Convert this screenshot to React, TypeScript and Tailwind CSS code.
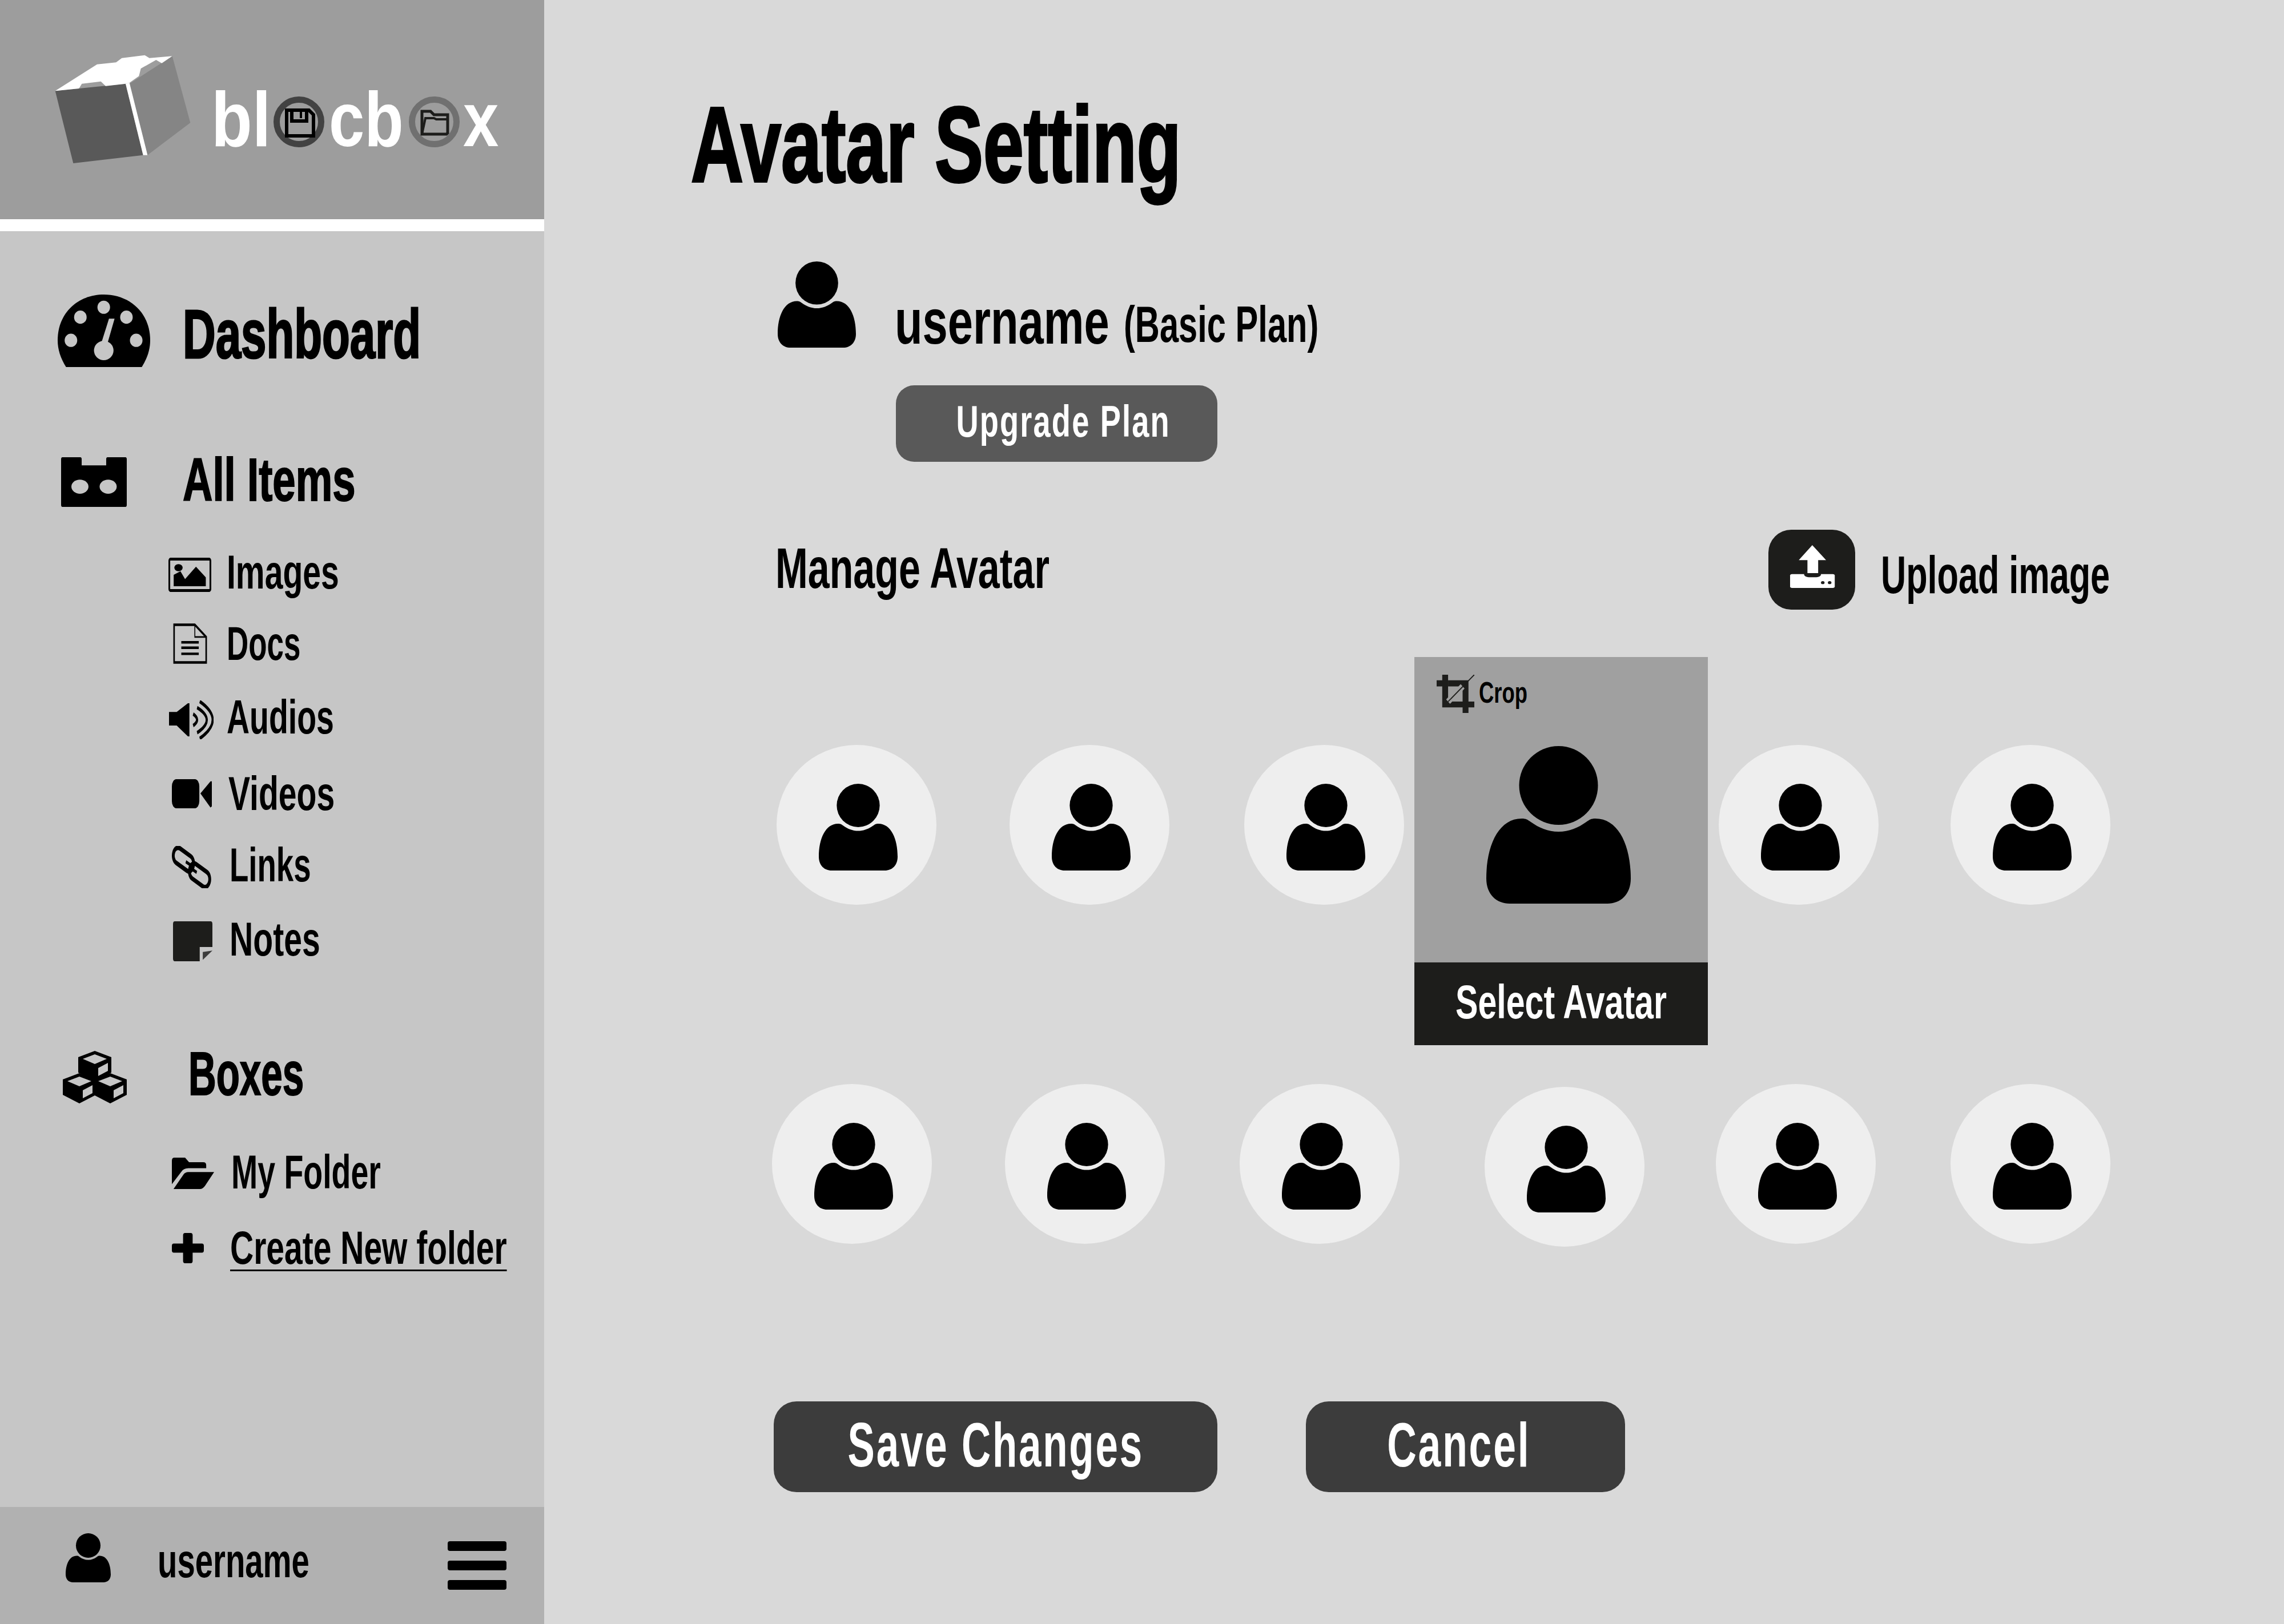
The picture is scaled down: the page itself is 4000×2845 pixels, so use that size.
import React from "react";

const label = "block whitespace-nowrap font-bold leading-none origin-left";
const centered = "block whitespace-nowrap font-bold leading-none origin-center tracking-[0.04em] text-white";

const PersonIcon = ({ className }: { className: string }) => (
  <svg viewBox="0 0 253 276" preserveAspectRatio="none" className={"shrink-0 " + className}>
    <ellipse cx="126.5" cy="69" rx="69" ry="69" fill="#000" />
    <path
      d="M62 127C70 127 72 129 78 133C92 143 108 150 126.5 150C145 150 161 143 175 133C181 129 183 127 191 127C232 127 253 175 253 232C253 260 235 276 212 276L41 276C18 276 0 260 0 232C0 175 21 127 62 127Z"
      fill="#000"
    />
  </svg>
);

const AvatarCircle = ({ className }: { className: string }) => (
  <div className={"flex size-[280px] shrink-0 items-center justify-center rounded-full bg-[#eeeeee] pl-[6px] pt-[7px] " + className}>
    <PersonIcon className="h-[152px] w-[138px]" />
  </div>
);

const CubeLogo = () => (
  <svg viewBox="0 0 900 720" className="h-[240px] w-[300px] shrink-0">
    <polygon points="50,238 145,618 512,575 420,200" fill="#595959" />
    <polygon points="440,200 535,575 760,405 665,55" fill="#858585" />
    <polygon
      points="50,238 270,98 370,88 400,65 520,50 545,65 665,55 610,92 580,75 500,120 490,160 440,195 420,200 315,212 290,188 190,200 175,225"
      fill="#fff"
    />
    <polygon points="420,200 440,195 535,575 512,575" fill="#fff" />
  </svg>
);

const FloppyRing = () => (
  <svg viewBox="0 0 89 89" className="size-[89px] shrink-0">
    <circle cx="44.5" cy="44.5" r="39" fill="none" stroke="#424242" strokeWidth="11" />
    <path d="M23 24H62L70 32V69H23Z" fill="none" stroke="#000" strokeWidth="6" />
    <path d="M32 24V43H58V24" fill="none" stroke="#000" strokeWidth="6" />
    <rect x="46" y="26" width="4" height="12" fill="#000" />
  </svg>
);

const FolderRing = () => (
  <svg viewBox="0 0 89 89" className="size-[89px] shrink-0">
    <circle cx="44.5" cy="44.5" r="39" fill="none" stroke="#707070" strokeWidth="11" />
    <path d="M23 66V26H38L44 32H68V64L66 66Z" fill="none" stroke="#1d1d1b" strokeWidth="5" />
    <path d="M23 66L29 38H44L48 40H68" fill="none" stroke="#1d1d1b" strokeWidth="4" />
  </svg>
);

const GaugeIcon = () => (
  <svg viewBox="0 0 265 285" preserveAspectRatio="none" className="h-[127px] w-[162px] shrink-0">
    <path d="M24 285C8 250 0 215 0 180C0 70 60 0 132 0C205 0 265 70 265 180C265 215 257 250 241 285Z" fill="#000" />
    <ellipse cx="132" cy="50" rx="18" ry="26" fill="#c6c6c6" />
    <ellipse cx="65" cy="89" rx="18" ry="26" fill="#c6c6c6" />
    <ellipse cx="197" cy="89" rx="18" ry="26" fill="#c6c6c6" />
    <ellipse cx="38" cy="180" rx="18" ry="26" fill="#c6c6c6" />
    <ellipse cx="225" cy="180" rx="18" ry="26" fill="#c6c6c6" />
    <ellipse cx="132" cy="220" rx="28" ry="38" fill="#c6c6c6" />
    <polygon points="147,95 163,95 142,195 124,195" fill="#c6c6c6" />
  </svg>
);

const AllItemsIcon = () => (
  <svg viewBox="0 0 300 140" preserveAspectRatio="none" className="h-[87px] w-[115px] shrink-0">
    <path d="M6 0H88Q94 0 94 6V23H206V6Q206 0 212 0H294Q300 0 300 6V134Q300 140 294 140H6Q0 140 0 134V6Q0 0 6 0Z" fill="#000" />
    <ellipse cx="86" cy="83" rx="39" ry="20" fill="#c6c6c6" />
    <ellipse cx="215" cy="83" rx="39" ry="20" fill="#c6c6c6" />
  </svg>
);

const ImagesIcon = () => (
  <svg viewBox="0 0 196 96" preserveAspectRatio="none" className="h-[60px] w-[75px] shrink-0">
    <rect x="4" y="4" width="188" height="88" rx="5" fill="none" stroke="#000" strokeWidth="8" />
    <ellipse cx="46" cy="28" rx="19" ry="10" fill="#000" />
    <polygon points="24,80 24,48 55,38 76,60 126,25 171,55 171,80" fill="#000" />
  </svg>
);

const DocsIcon = () => (
  <svg viewBox="0 0 157 113" preserveAspectRatio="none" className="h-[71px] w-[60px] shrink-0">
    <path d="M5 4H100L152 38V109H5Z" fill="none" stroke="#000" strokeWidth="7" />
    <path d="M100 4V38H152" fill="none" stroke="#000" strokeWidth="4" />
    <path d="M38 53H118M38 68H118M38 85H118" fill="none" stroke="#000" strokeWidth="7" />
  </svg>
);

const AudioIcon = () => (
  <svg viewBox="0 0 203 108" preserveAspectRatio="none" className="h-[68px] w-[78px] shrink-0">
    <polygon points="0,32 35,32 86,8 93,8 93,100 86,100 35,70 0,70" fill="#000" />
    <path d="M110 38Q146 54 110 70" fill="none" stroke="#000" strokeWidth="10" />
    <path d="M128 20Q216 54 128 90" fill="none" stroke="#000" strokeWidth="10" />
    <path d="M140 3Q258 54 140 106" fill="none" stroke="#000" strokeWidth="10" />
  </svg>
);

const VideoIcon = () => (
  <svg viewBox="0 0 182 82" preserveAspectRatio="none" className="h-[51px] w-[70px] shrink-0">
    <rect x="0" y="0" width="125" height="82" rx="20" fill="#000" />
    <polygon points="130,40 176,6 182,6 182,76 176,80" fill="#000" />
  </svg>
);

const LinkIcon = () => (
  <svg viewBox="0 0 194 118" preserveAspectRatio="none" className="h-[74px] w-[74px] shrink-0">
    <rect x="12" y="16" width="98" height="44" rx="22" transform="rotate(24 61 38)" fill="none" stroke="#000" strokeWidth="13" />
    <rect x="86" y="60" width="98" height="44" rx="22" transform="rotate(24 135 82)" fill="none" stroke="#000" strokeWidth="13" />
    <path d="M72 44L100 56M94 62L122 74" fill="none" stroke="#000" strokeWidth="9" />
  </svg>
);

const NotesIcon = () => (
  <svg viewBox="0 0 180 112" preserveAspectRatio="none" className="h-[70px] w-[69px] shrink-0">
    <path d="M8 0H172Q180 0 180 8V72H122V112H8Q0 112 0 104V8Q0 0 8 0Z" fill="#1d1d1b" />
    <polygon points="136,108 136,86 180,82" fill="#3d3d3d" />
  </svg>
);

const Cube = ({ x, y }: { x: number; y: number }) => (
  <g transform={`translate(${x} ${y})`}>
    <polygon points="29,0 58,11 58,38 29,53 0,38 0,11" fill="#000" />
    <polygon points="29,6 50,14 29,23 8,14" fill="#c6c6c6" />
    <polygon points="35,30 52,21 52,35 35,44" fill="#c6c6c6" />
  </g>
);

const BoxesIcon = () => (
  <svg viewBox="0 0 112 92" className="h-[92px] w-[112px] shrink-0">
    <Cube x={27} y={0} />
    <Cube x={0} y={39} />
    <Cube x={54} y={39} />
  </svg>
);

const FolderIcon = () => (
  <svg viewBox="0 0 128 83" preserveAspectRatio="none" className="h-[55px] w-[74px] shrink-0">
    <path d="M0 70V8Q0 0 8 0H40L52 12H95Q104 12 104 20V28H50Q35 28 28 38Z" fill="#000" />
    <path d="M5 83L35 45Q40 38 50 38H128L100 75Q93 83 85 83Z" fill="#000" />
  </svg>
);

const PlusIcon = () => (
  <svg viewBox="0 0 97 80" preserveAspectRatio="none" className="h-[53px] w-[56px] shrink-0">
    <rect x="0" y="28" width="97" height="24" rx="6" fill="#000" />
    <rect x="34" y="0" width="29" height="80" rx="6" fill="#000" />
  </svg>
);

const CropIcon = () => (
  <svg viewBox="0 0 148 138" preserveAspectRatio="none" className="h-[67px] w-[66px] shrink-0">
    <path d="M22 0H45V97H148V118H125V138H102V118H22V42H0V20H22Z" fill="#1d1d1b" />
    <path d="M45 42V20H125V97H102V42Z" fill="#1d1d1b" />
    <path d="M45 97L102 42" stroke="#a0a0a0" strokeWidth="22" />
    <path d="M45 97L148 0" stroke="#1d1d1b" strokeWidth="4" />
  </svg>
);

const UploadIcon = () => (
  <div className="h-[140px] w-[152px] shrink-0 rounded-[40px] bg-[#1d1d1b]">
    <svg viewBox="0 0 340 420" preserveAspectRatio="none" className="h-full w-full">
      <rect x="85" y="233" width="175" height="73" rx="8" fill="#fff" />
      <rect x="140" y="220" width="66" height="30" rx="18" fill="#1d1d1b" />
      <polygon points="172,81 226,160 195,160 195,228 153,228 153,160 119,160" fill="#fff" />
      <ellipse cx="213" cy="278" rx="7" ry="8" fill="#1d1d1b" />
      <ellipse cx="240" cy="278" rx="7" ry="8" fill="#1d1d1b" />
    </svg>
  </div>
);

const Sidebar = () => (
  <aside className="flex h-full w-[953px] shrink-0 flex-col bg-[#c6c6c6]">
    <div className="flex h-[384px] items-start bg-[#9d9d9d]">
      <div className="ml-[80px] mt-[80px]">
        <CubeLogo />
      </div>
      <div className="-ml-[10px] mt-[169px] flex h-[89px] items-center text-white">
        <span className={label + " w-[109px] pb-[8px] text-[135px] scale-x-[0.87]"}>bl</span>
        <FloppyRing />
        <span className={label + " ml-[8px] w-[140px] pb-[8px] text-[135px] scale-x-[0.83]"}>cb</span>
        <FolderRing />
        <span className={label + " ml-[6px] w-[68px] pb-[8px] text-[135px] scale-x-[0.83]"}>x</span>
      </div>
    </div>
    <div className="h-[21px] bg-white" />

    <div className="mt-[110px] flex h-[140px] items-center">
      <div className="mb-[12px] ml-[101px]">
        <GaugeIcon />
      </div>
      <span className={label + " ml-[57px] text-[121px] scale-x-[0.66] [-webkit-text-stroke:3px_#000]"}>Dashboard</span>
    </div>

    <div className="mt-[135px] flex h-[100px] items-center">
      <div className="ml-[107px] mt-[8px]">
        <AllItemsIcon />
      </div>
      <span className={label + " ml-[98px] text-[106px] scale-x-[0.685] [-webkit-text-stroke:2px_#000]"}>All Items</span>
    </div>

    <div className="mt-[62px] flex h-[100px] items-center">
      <div className="ml-[295px] mt-[10px]">
        <ImagesIcon />
      </div>
      <span className={label + " ml-[27px] text-[84px] scale-x-[0.68]"}>Images</span>
    </div>
    <div className="mt-[25px] flex h-[100px] items-center">
      <div className="ml-[303px]">
        <DocsIcon />
      </div>
      <span className={label + " ml-[34px] text-[84px] scale-x-[0.63]"}>Docs</span>
    </div>
    <div className="mt-[29px] flex h-[100px] items-center">
      <div className="ml-[296px] mt-[10px]">
        <AudioIcon />
      </div>
      <span className={label + " ml-[23px] text-[84px] scale-x-[0.66]"}>Audios</span>
    </div>
    <div className="mt-[34px] flex h-[100px] items-center">
      <div className="ml-[301px]">
        <VideoIcon />
      </div>
      <span className={label + " ml-[29px] text-[84px] scale-x-[0.68]"}>Videos</span>
    </div>
    <div className="mt-[25px] flex h-[100px] items-center">
      <div className="ml-[298px] mt-[8px]">
        <LinkIcon />
      </div>
      <span className={label + " ml-[30px] text-[84px] scale-x-[0.65]"}>Links</span>
    </div>
    <div className="mt-[30px] flex h-[100px] items-center">
      <div className="ml-[303px] mt-[8px]">
        <NotesIcon />
      </div>
      <span className={label + " ml-[30px] text-[84px] scale-x-[0.68]"}>Notes</span>
    </div>

    <div className="mt-[136px] flex h-[100px] items-center">
      <div className="ml-[110px] mt-[12px]">
        <BoxesIcon />
      </div>
      <span className={label + " ml-[108px] text-[107px] scale-x-[0.63] [-webkit-text-stroke:2px_#000]"}>Boxes</span>
    </div>
    <div className="mt-[82px] flex h-[80px] items-center">
      <div className="ml-[301px] mt-[4px]">
        <FolderIcon />
      </div>
      <span className={label + " ml-[30px] text-[84px] scale-x-[0.66]"}>My Folder</span>
    </div>
    <div className="mt-[53px] flex h-[80px] items-center">
      <div className="ml-[301px]">
        <PlusIcon />
      </div>
      <span className={label + " ml-[46px] text-[82px] scale-x-[0.695] underline decoration-[3px] underline-offset-[10px]"}>
        Create New folder
      </span>
    </div>

    <div className="mt-auto flex h-[205px] items-center bg-[#b1b1b1]">
      <PersonIcon className="mb-[28px] ml-[115px] h-[86px] w-[79px]" />
      <span className={label + " mb-[18px] ml-[82px] text-[84px] scale-x-[0.67]"}>username</span>
      <div className="ml-auto mr-[66px] flex w-[103px] flex-col gap-[17px]">
        <div className="h-[17px] rounded-[4px] bg-black" />
        <div className="h-[17px] rounded-[4px] bg-black" />
        <div className="h-[17px] rounded-[4px] bg-black" />
      </div>
    </div>
  </aside>
);

const Main = () => (
  <main className="flex h-full flex-1 flex-col bg-[#d9d9d9]">
    <h1 className={label + " ml-[257px] mt-[160px] text-[187px] scale-x-[0.681] [-webkit-text-stroke:4px_#000]"}>
      Avatar Setting
    </h1>

    <div className="ml-[409px] mt-[111px] flex h-[162px] items-start">
      <PersonIcon className="h-[151px] w-[137px]" />
      <span className={label + " ml-[68px] mt-[50px] w-[372px] text-[112px] scale-x-[0.71]"}>username</span>
      <span className={label + " ml-[29px] mt-[66px] text-[89px] scale-x-[0.67]"}>(Basic Plan)</span>
    </div>

    <button className="ml-[616px] mt-[55px] flex h-[134px] w-[563px] items-center justify-center rounded-[32px] bg-[#595959] pb-[8px] pl-[24px]">
      <span className={centered + " text-[78px] scale-x-[0.695]"}>Upgrade Plan</span>
    </button>

    <div className="ml-[405px] mt-[119px] flex h-[140px] items-center">
      <span className={label + " mb-[6px] w-[1739px] text-[101px] scale-x-[0.675]"}>Manage Avatar</span>
      <UploadIcon />
      <span className={label + " ml-[45px] mt-[18px] text-[92px] scale-x-[0.665]"}>Upload image</span>
    </div>

    <div className="mt-[83px] flex h-[680px] items-start">
      <AvatarCircle className="ml-[407px] mt-[154px]" />
      <AvatarCircle className="ml-[128px] mt-[154px]" />
      <AvatarCircle className="ml-[131px] mt-[154px]" />
      <div className="ml-[18px] flex h-[680px] w-[514px] shrink-0 flex-col bg-[#a0a0a0]">
        <div className="relative flex-1">
          <div className="ml-[39px] mt-[31px] flex items-start">
            <CropIcon />
            <span className={label + " ml-[8px] mt-[5px] text-[52px] scale-x-[0.70]"}>Crop</span>
          </div>
          <div className="ml-[126px] mt-[58px]">
            <PersonIcon className="h-[276px] w-[253px]" />
          </div>
        </div>
        <div className="flex h-[145px] items-center justify-center bg-[#1d1d1b] pb-[8px]">
          <span className="block origin-center scale-x-[0.703] whitespace-nowrap text-[84px] font-bold leading-none text-white">
            Select Avatar
          </span>
        </div>
      </div>
      <AvatarCircle className="ml-[19px] mt-[154px]" />
      <AvatarCircle className="ml-[126px] mt-[154px]" />
    </div>

    <div className="mt-[68px] flex h-[284px] items-start">
      <AvatarCircle className="ml-[399px]" />
      <AvatarCircle className="ml-[128px]" />
      <AvatarCircle className="ml-[131px]" />
      <AvatarCircle className="ml-[149px] mt-[5px]" />
      <AvatarCircle className="ml-[125px]" />
      <AvatarCircle className="ml-[131px]" />
    </div>

    <div className="ml-[402px] mt-[272px] flex items-start">
      <button className="flex h-[159px] w-[777px] items-center justify-center rounded-[40px] bg-[#3c3c3c] pb-[6px]">
        <span className={centered + " text-[109px] scale-x-[0.65]"}>Save Changes</span>
      </button>
      <button className="ml-[155px] flex h-[159px] w-[559px] items-center justify-center rounded-[40px] bg-[#3c3c3c] pb-[6px] pr-[24px]">
        <span className={centered + " text-[109px] scale-x-[0.655]"}>Cancel</span>
      </button>
    </div>
  </main>
);

export default function App() {
  return (
    <div className="flex h-[2845px] w-[4000px] overflow-hidden font-['Liberation_Sans',Arial,sans-serif] text-black">
      <Sidebar />
      <Main />
    </div>
  );
}
